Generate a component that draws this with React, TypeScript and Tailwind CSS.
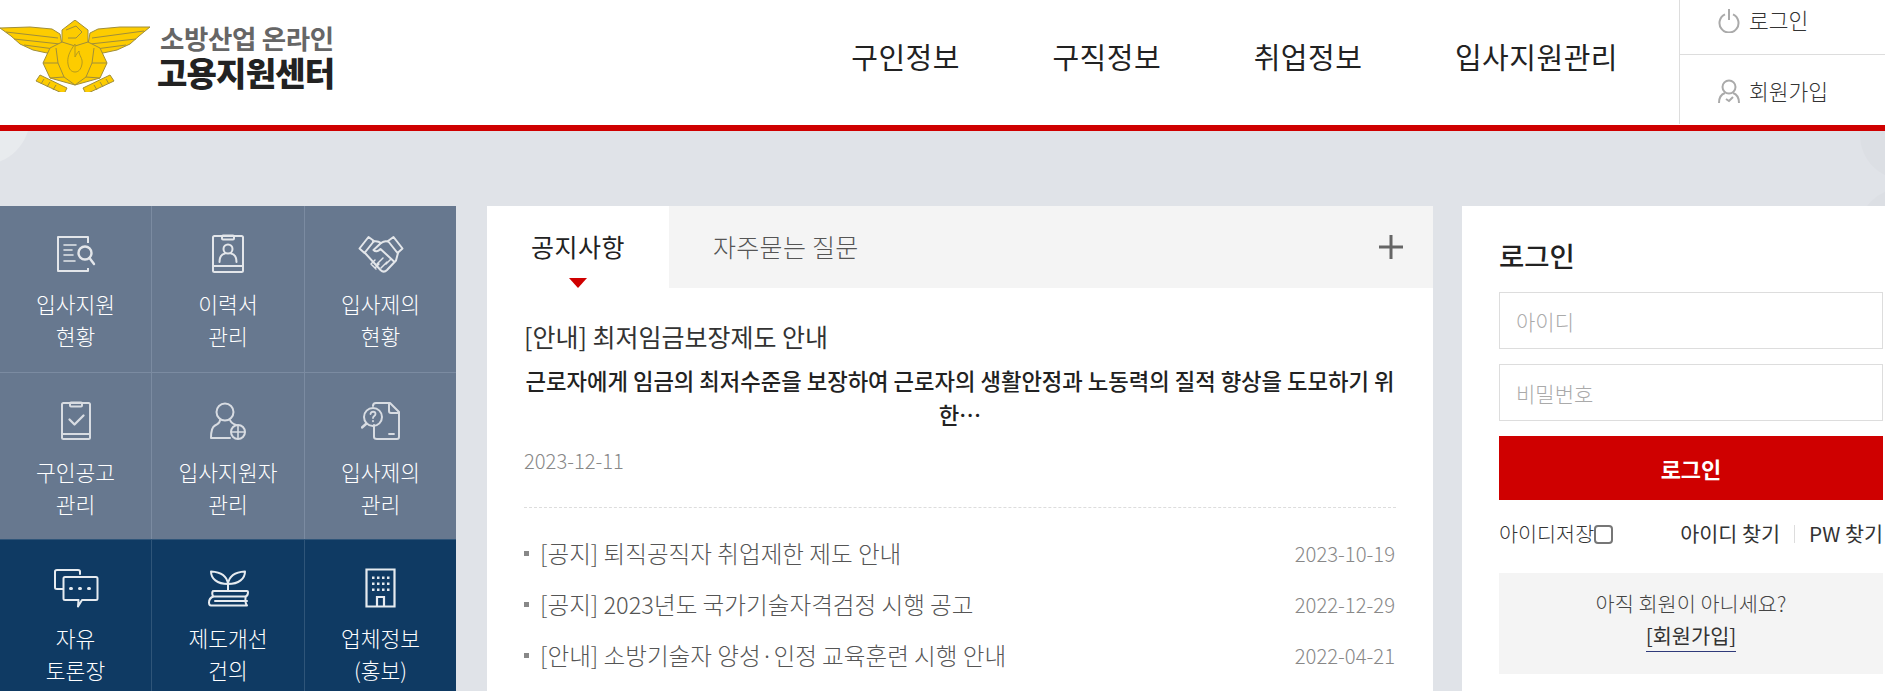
import React from "react";

const S = ({ children, w, h, vb }: { children: React.ReactNode; w: number; h: number; vb: string }) => (
  <svg width={w} height={h} viewBox={vb} fill="none" stroke="currentColor" strokeWidth={2} strokeLinejoin="round" strokeLinecap="round" className="block">
    {children}
  </svg>
);

const IconDoc = () => (
  <S w={40} h={38} vb="0 0 40 38">
    <path d="M32 8V2H2v34h30v-3" strokeLinecap="butt" />
    <path d="M8 10h12M8 15h8M8 20h9M8 26h11" strokeWidth={1.6} />
    <circle cx="29" cy="18" r="6.5" strokeWidth={2.4} />
    <path d="M33.5 23l4.5 6" strokeWidth={2.4} />
  </S>
);
const IconResume = () => (
  <S w={34} h={40} vb="0 0 34 40">
    <rect x="2" y="2" width="30" height="36" rx="1.5" />
    <rect x="11" y="1.5" width="12" height="4" rx="1" />
    <path d="M2 32h30" />
    <circle cx="17" cy="15" r="4.5" />
    <path d="M8.5 28c0-6 3-8 5.5-8.5M25.5 28c0-6-3-8-5.5-8.5" />
  </S>
);
const IconHands = () => (
  <S w={46} h={40} vb="0 0 46 40">
    <path d="M1.5 14.5L10.5 3l5.5 4-9.5 12zM44.5 14.5L35.5 3l-5.5 4 9.5 12z" />
    <path d="M15 7.5c4-1 6 0 8 1.5l-7.5 7c2 2 4.5 1.5 7-1l13 12" />
    <path d="M30 7.5c-3-1-5 0-7 1.5" />
    <path d="M7 19l15.5 17c2.500 2.500 5 1.500 6.500 0l9-9.500 2-7.500" />
    <path d="M17 26l-4 4 5 5M21 30l-4 4M25 24l-6 6M29 28l-6 6M33 25l-5 5" strokeWidth={1.5} />
  </S>
);
const IconClipboard = () => (
  <S w={32} h={40} vb="0 0 32 40">
    <rect x="2" y="2" width="28" height="36" rx="1.5" />
    <rect x="10" y="1.5" width="12" height="4" rx="1" />
    <path d="M2 33h28" />
    <path d="M9.5 18.5l5 5 9-9" strokeWidth={2.3} />
  </S>
);
const IconUserPlus = () => (
  <S w={38} h={40} vb="0 0 38 40">
    <circle cx="16" cy="11" r="8.5" />
    <path d="M11 19c0 3-2 4-5 5.500-3 1.500-4 5-4 12.500h19M21 19c1 3 3 4 6 5" />
    <circle cx="29" cy="31" r="7" />
    <path d="M29 25v12M23 31h12" strokeWidth={1.6} />
  </S>
);
const IconDocQ = () => (
  <S w={40} h={40} vb="0 0 40 40">
    <path d="M12 5c0-2 1-3 3-3h14l9 9v25c0 1.500-1 2-2 2H16c-2 0-3-1-3-2V24" />
    <path d="M28 2v8c0 1 1 2 2 2h8" />
    <circle cx="12" cy="16" r="9" />
    <path d="M5.5 22.5L1 26.5" strokeWidth={2.4} />
    <path d="M9.5 13c.5-3 5-3 5 0 0 2-2.500 2-2.500 4M12 19.8v.5" strokeWidth={1.8} />
    <path d="M28 33h5" strokeWidth={1.8} />
  </S>
);
const IconChat = () => (
  <S w={46} h={40} vb="0 0 46 40">
    <path d="M27 6V3.5C27 2.500 26 2 25 2H4C3 2 2 2.500 2 3.500v16c0 1 1 1.500 2 1.500h6" />
    <path d="M12 9h31c1 0 1.500.5 1.500 1.500v20c0 1-.5 1.500-1.500 1.500H29l-4 6.500.5-6.500H12c-1 0-1.500-.5-1.500-1.500v-20C10.500 9.500 11 9 12 9z" />
    <path d="M17.5 20.5h1M26.5 20.5h1M35.5 20.5h1" strokeWidth={3} />
  </S>
);
const IconSprout = () => (
  <S w={42} h={38} vb="0 0 42 38">
    <path d="M21 22V15C20 7 13 3 4 2.5c0 7 6 12.5 17 12.5" />
    <path d="M21 15C22 7 29 3 38 2.5c0 7-6 12.5-17 12.5" />
    <path d="M7 22h33c1 0 1 .5 1 1 0 2-1 4-2 4.5H6c-2 1-4 3-4 6 0 2 1 3 2 3h36c-2-2-2-7-1-9.500" />
    <path d="M6 22c-1 1-1 3 0 5.500" />
    <path d="M8 32h32" />
  </S>
);
const IconBuilding = () => (
  <svg width={31} height={40} viewBox="0 0 31 40" className="block">
    <path d="M1.5 1.5h28v37h-28zM12 38.5V29h7v9.5" fill="none" stroke="currentColor" strokeWidth={2.2} />
    {[10, 16, 22].map((y) =>
      [8, 13, 18, 23].map((x) => <rect key={x + "-" + y} x={x - 1} y={y - 1.5} width={2.5} height={2.5} fill="currentColor" />)
    )}
  </svg>
);

const Logo = () => (
  <svg width={150} height={72} viewBox="0 0 150 72" className="block" stroke="#a08e3a" strokeWidth={1} fill="#fdcc00" strokeLinejoin="round">
    <path d="M0 8l30-1 22 2 8 5 3 16-16 3-14-3-13-6-9-8z" />
    <path d="M150 7l-30 0-22 2-8 4-3 17 16 3 14-3 13-6 9-8z" />
    <path d="M6 12l52 6M14 19l46 5M24 25l38 5M144 11l-52 7M136 19l-46 5M126 25l-38 5" fill="none" />
    <path d="M75 0l13 10v12l12 6 7 15-7 15-25 7-25-7-7-15 7-15 12-6V10z" />
    <path d="M62 22l13 4 13-4M56 28l2 15-15 0M94 28l-2 15 15 0M58 43l6 14 11 8 11-8 6-14M50 58l14-1M100 58l-14-1M66 10l10-4 6 6-6 6h-8" fill="none" />
    <path d="M75 24c-6 8-8 14-7 20 1 6 4 8 7 8s6-2 7-8c1-6-3-8-3-13-2 2-3 4-4 6 0-4 0-8 0-13z" stroke="#b59a1e" />
    <path d="M40 55l27 13-3 6-28-13zM110 55l-27 13 3 6 28-13z" />
    <path d="M44 59l-3 5M50 62l-3 5M56 65l-3 5M106 59l3 5M100 62l3 5M94 65l3 5" fill="none" />
  </svg>
);

type Item = { l1: string; l2: string; icon: React.ReactNode };
const row1: Item[] = [
  { l1: "입사지원", l2: "현황", icon: <IconDoc /> },
  { l1: "이력서", l2: "관리", icon: <IconResume /> },
  { l1: "입사제의", l2: "현황", icon: <IconHands /> },
];
const row2: Item[] = [
  { l1: "구인공고", l2: "관리", icon: <IconClipboard /> },
  { l1: "입사지원자", l2: "관리", icon: <IconUserPlus /> },
  { l1: "입사제의", l2: "관리", icon: <IconDocQ /> },
];
const row3: Item[] = [
  { l1: "자유", l2: "토론장", icon: <IconChat /> },
  { l1: "제도개선", l2: "건의", icon: <IconSprout /> },
  { l1: "업체정보", l2: "(홍보)", icon: <IconBuilding /> },
];

const cellW = ["w-[152px]", "w-[153px]", "w-[151px]"];

const Row = ({ items, className, iconClass, border, textTop }: { items: Item[]; className: string; iconClass: string; border: string; textTop: string }) => (
  <div className={"flex " + className}>
    {items.map((it, i) => (
      <div key={it.l1 + i} className={cellW[i] + " flex-none flex flex-col items-center pt-[27px] " + (i < 2 ? "border-r " + border : "")}>
        <div className={"flex items-center justify-center h-[42px] " + iconClass}>{it.icon}</div>
        <div className={"text-white text-[21.5px] leading-[32px] text-center font-light " + textTop}>
          <div>{it.l1}</div>
          <div>{it.l2}</div>
        </div>
      </div>
    ))}
  </div>
);

const news = [
  { t: "[공지] 퇴직공직자 취업제한 제도 안내", d: "2023-10-19" },
  { t: "[공지] 2023년도 국가기술자격검정 시행 공고", d: "2022-12-29" },
  { t: "[안내] 소방기술자 양성·인정 교육훈련 시행 안내", d: "2022-04-21" },
];

export default function App() {
  return (
    <div className="relative h-[691px] w-full overflow-hidden bg-[#e0e3e8] font-['Noto_Sans_CJK_KR','Noto_Sans',sans-serif]">
      {/* faint background shapes */}
      <div className="absolute left-[-66px] top-[69px] h-[96px] w-[96px] rounded-full bg-[#e8ebee]" />
      <div className="absolute left-[1860px] top-[90px] h-[90px] w-[90px] rounded-full bg-[#dcdfe4]" />
      <div className="absolute left-[1858px] top-[188px] h-[90px] w-[90px] rounded-full bg-[#dcdfe4]" />

      <header className="relative flex h-[131px] items-start border-b-[6px] border-[#cf0000] bg-white">
        <div className="flex items-center pt-[20px]">
          <Logo />
          <div className="ml-[7px] mt-[1px] flex flex-col items-start">
            <span className="ml-[3px] text-[26.5px] leading-[31px] font-bold tracking-[-0.35px] text-[#666]">소방산업 온라인</span>
            <span className="text-[33px] leading-[38px] font-black tracking-[-0.8px] text-[#222]">고용지원센터</span>
          </div>
        </div>
        <nav className="ml-auto mr-[61px] flex h-[112px] items-center gap-[92.5px] text-[29px] font-normal leading-none tracking-[0.5px] text-[#222]">
          <span>구인정보</span>
          <span>구직정보</span>
          <span>취업정보</span>
          <span>입사지원관리</span>
        </nav>
        <div className="h-[124px] w-[206px] flex-none border-l border-[#ddd]">
          <div className="flex h-[55px] items-start gap-[9px] border-b border-[#ddd] pl-[38px] pt-[8px] text-[21.5px] font-light leading-[24px] text-[#333]">
            <svg width={22} height={24} viewBox="0 0 22 24" fill="none" stroke="#aaa" strokeWidth={2} className="mt-[1px] block">
              <path d="M7 5.4a9.5 9.5 0 1 0 8 0M11 0v11" />
            </svg>
            <span>로그인</span>
          </div>
          <div className="flex items-start gap-[9px] pl-[38px] pt-[24px] text-[21.5px] font-light leading-[24px] text-[#333]">
            <svg width={22} height={24} viewBox="0 0 22 24" fill="none" stroke="#aaa" strokeWidth={2} className="block">
              <circle cx="11" cy="8" r="6.5" />
              <path d="M1 24c0-6 3-9 6-10M21 24c0-6-3-9-6-10M8 20l3 2 4-4" />
            </svg>
            <span>회원가입</span>
          </div>
        </div>
      </header>

      <main className="relative mt-[75px] flex items-start">
        {/* sidebar */}
        <aside className="w-[456px] flex-none">
          <Row items={row1} className="h-[167px] bg-[#67788f] border-b border-[#7b8ba1]" iconClass="text-[#e3e6ea]" border="border-[#7b8ba1]" textTop="mt-[13px]" />
          <Row items={row2} className="h-[166px] bg-[#67788f]" iconClass="text-[#d8dce2]" border="border-[#7b8ba1]" textTop="mt-[14px]" />
          <Row items={row3} className="h-[153px] bg-[#0f3a63] border-t border-[#2f5579]" iconClass="text-[#e6ebf0]" border="border-[#2f5579]" textTop="mt-[13px]" />
        </aside>

        {/* notice card */}
        <section className="ml-[31px] h-[486px] w-[946px] flex-none bg-white">
          <div className="flex h-[82px] bg-[#f4f4f4]">
            <div className="relative flex w-[182px] items-center justify-center bg-white text-[25px] font-normal tracking-[0.5px] text-[#222]">
              공지사항
              <span className="absolute bottom-0 left-[82px] h-0 w-0 border-x-[9px] border-t-[10px] border-x-transparent border-t-[#cf0000]" />
            </div>
            <div className="ml-[44px] flex items-center text-[25px] font-light tracking-[0.3px] text-[#555]">자주묻는 질문</div>
            <svg width={24} height={24} viewBox="0 0 24 24" stroke="#666" strokeWidth={3} className="ml-auto mr-[30px] self-center block">
              <path d="M12 0v24M0 12h24" />
            </svg>
          </div>
          <div className="px-[37px] pt-[30px]">
            <h3 className="text-[25px] font-normal leading-[36px] text-[#333]">[안내] 최저임금보장제도 안내</h3>
            <p className="mt-[9px] text-center text-[22.25px] font-medium leading-[34px] text-[#222]">
              근로자에게 임금의 최저수준을 보장하여 근로자의 생활안정과 노동력의 질적 향상을 도모하기 위한…
            </p>
            <div className="mt-[15px] text-[20.2px] font-light leading-[30px] text-[#888]">2023-12-11</div>
            <div className="mt-[31px] border-t border-dashed border-[#ddd]" />
            <ul className="mt-[20px] flex flex-col">
              {news.map((n) => (
                <li key={n.d} className="flex h-[51px] items-center text-[23.6px] font-light text-[#555]">
                  <span className="mr-[11px] h-[5px] w-[5px] flex-none bg-[#888]" />
                  <span className="flex-1">{n.t}</span>
                  <span className="mr-[1px] text-[20.3px] text-[#888]">{n.d}</span>
                </li>
              ))}
            </ul>
          </div>
        </section>

        {/* login card */}
        <section className="ml-[29px] h-[486px] w-[458px] flex-none bg-white px-[37px] pt-[30px]">
          <h2 className="text-[27.5px] font-medium leading-[38px] text-[#222]">로그인</h2>
          <input placeholder="아이디" className="mt-[18px] block h-[57px] w-[384px] border border-[#ddd] px-[16px] text-[21px] font-light placeholder:text-[#aaa] outline-none" />
          <input placeholder="비밀번호" className="mt-[15px] block h-[57px] w-[384px] border border-[#ddd] px-[16px] text-[21px] font-light placeholder:text-[#aaa] outline-none" />
          <button className="mt-[15px] block h-[64px] w-[384px] bg-[#cf0000] text-[22px] font-bold text-white">로그인</button>
          <div className="mt-[20px] flex h-[28px] items-center text-[20.7px] font-light text-[#333]">
            <span>아이디저장</span>
            <input type="checkbox" className="m-0 h-[19px] w-[19px] flex-none appearance-none rounded-[4px] border-2 border-[#767676] bg-white" />
            <span className="ml-auto font-normal">아이디 찾기</span>
            <span className="mx-[14px] h-[18px] w-px bg-[#ddd]" />
            <span className="font-normal">PW 찾기</span>
          </div>
          <div className="mt-[25px] flex h-[101px] w-[384px] flex-col items-center bg-[#f4f4f4] pt-[14px] text-[20.8px] leading-[32px] text-[#444]">
            <span className="font-light">아직 회원이 아니세요?</span>
            <a className="border-b border-[#2f3a7a] font-normal text-[#333]">[회원가입]</a>
          </div>
        </section>
      </main>
    </div>
  );
}
